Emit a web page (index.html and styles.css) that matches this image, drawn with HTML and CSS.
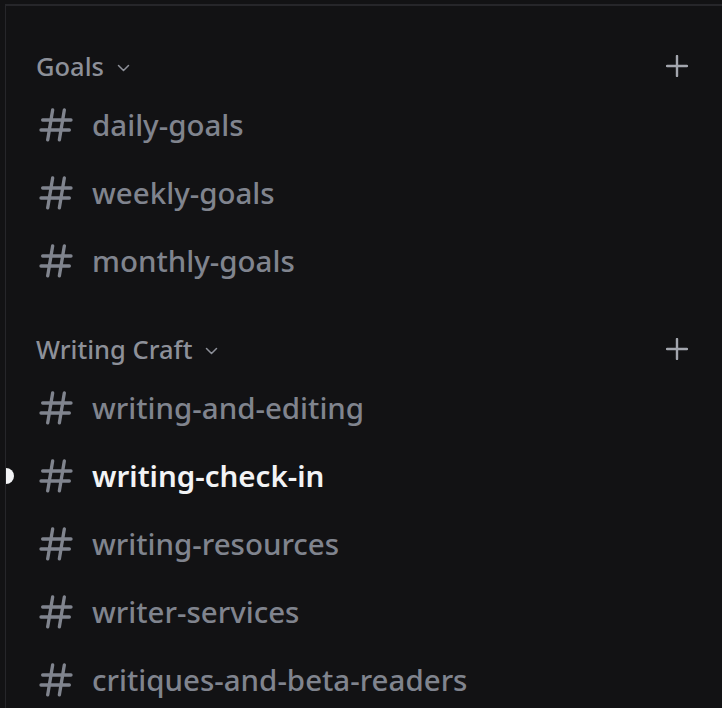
FILE: index.html
```html
<!DOCTYPE html>
<html>
<head>
<meta charset="utf-8">
<link rel="stylesheet" href="styles.css">
</head>
<body>
<div class="frame">
  <div class="panel">
    <section class="category">
      <div class="cat-head">
        <span class="cat-name">Goals</span>
        <svg class="chev" viewBox="0 0 12 8"><path d="M1 1.5l5 5 5-5" fill="none" stroke="currentColor" stroke-width="1.5" stroke-linecap="round" stroke-linejoin="round"/></svg>
        <svg class="plus" viewBox="0 0 22 22"><path d="M11 1v20M1 11h20" stroke="currentColor" stroke-width="2.4" stroke-linecap="round"/></svg>
      </div>
      <div class="channel"><svg class="hash" viewBox="0 0 24 24"><path fill="currentColor" fill-rule="evenodd" d="M10.99 3.16A1 1 0 1 0 9 2.84L8.15 8H4a1 1 0 0 0 0 2h3.82l-.67 4H3a1 1 0 1 0 0 2h3.82l-.8 4.84a1 1 0 0 0 1.97.32L8.85 16h4.97l-.8 4.84a1 1 0 0 0 1.97.32l.86-5.16H20a1 1 0 1 0 0-2h-3.82l.67-4H21a1 1 0 1 0 0-2h-3.82l.8-4.84a1 1 0 1 0-1.97-.32L15.15 8h-4.97l.8-4.84ZM14.15 14l.67-4H9.85l-.67 4h4.97Z"/></svg><span class="ch-name">daily-goals</span></div>
      <div class="channel"><svg class="hash" viewBox="0 0 24 24"><path fill="currentColor" fill-rule="evenodd" d="M10.99 3.16A1 1 0 1 0 9 2.84L8.15 8H4a1 1 0 0 0 0 2h3.82l-.67 4H3a1 1 0 1 0 0 2h3.82l-.8 4.84a1 1 0 0 0 1.97.32L8.85 16h4.97l-.8 4.84a1 1 0 0 0 1.97.32l.86-5.16H20a1 1 0 1 0 0-2h-3.82l.67-4H21a1 1 0 1 0 0-2h-3.82l.8-4.84a1 1 0 1 0-1.97-.32L15.15 8h-4.97l.8-4.84ZM14.15 14l.67-4H9.85l-.67 4h4.97Z"/></svg><span class="ch-name">weekly-goals</span></div>
      <div class="channel"><svg class="hash" viewBox="0 0 24 24"><path fill="currentColor" fill-rule="evenodd" d="M10.99 3.16A1 1 0 1 0 9 2.84L8.15 8H4a1 1 0 0 0 0 2h3.82l-.67 4H3a1 1 0 1 0 0 2h3.82l-.8 4.84a1 1 0 0 0 1.97.32L8.85 16h4.97l-.8 4.84a1 1 0 0 0 1.97.32l.86-5.16H20a1 1 0 1 0 0-2h-3.82l.67-4H21a1 1 0 1 0 0-2h-3.82l.8-4.84a1 1 0 1 0-1.97-.32L15.15 8h-4.97l.8-4.84ZM14.15 14l.67-4H9.85l-.67 4h4.97Z"/></svg><span class="ch-name">monthly-goals</span></div>
    </section>
    <section class="category">
      <div class="cat-head">
        <span class="cat-name">Writing Craft</span>
        <svg class="chev" viewBox="0 0 12 8"><path d="M1 1.5l5 5 5-5" fill="none" stroke="currentColor" stroke-width="1.5" stroke-linecap="round" stroke-linejoin="round"/></svg>
        <svg class="plus" viewBox="0 0 22 22"><path d="M11 1v20M1 11h20" stroke="currentColor" stroke-width="2.4" stroke-linecap="round"/></svg>
      </div>
      <div class="channel"><svg class="hash" viewBox="0 0 24 24"><path fill="currentColor" fill-rule="evenodd" d="M10.99 3.16A1 1 0 1 0 9 2.84L8.15 8H4a1 1 0 0 0 0 2h3.82l-.67 4H3a1 1 0 1 0 0 2h3.82l-.8 4.84a1 1 0 0 0 1.97.32L8.85 16h4.97l-.8 4.84a1 1 0 0 0 1.97.32l.86-5.16H20a1 1 0 1 0 0-2h-3.82l.67-4H21a1 1 0 1 0 0-2h-3.82l.8-4.84a1 1 0 1 0-1.97-.32L15.15 8h-4.97l.8-4.84ZM14.15 14l.67-4H9.85l-.67 4h4.97Z"/></svg><span class="ch-name">writing-and-editing</span></div>
      <div class="channel unread"><span class="pill"></span><svg class="hash" viewBox="0 0 24 24"><path fill="currentColor" fill-rule="evenodd" d="M10.99 3.16A1 1 0 1 0 9 2.84L8.15 8H4a1 1 0 0 0 0 2h3.82l-.67 4H3a1 1 0 1 0 0 2h3.82l-.8 4.84a1 1 0 0 0 1.97.32L8.85 16h4.97l-.8 4.84a1 1 0 0 0 1.97.32l.86-5.16H20a1 1 0 1 0 0-2h-3.82l.67-4H21a1 1 0 1 0 0-2h-3.82l.8-4.84a1 1 0 1 0-1.97-.32L15.15 8h-4.97l.8-4.84ZM14.15 14l.67-4H9.85l-.67 4h4.97Z"/></svg><span class="ch-name">writing-check-in</span></div>
      <div class="channel"><svg class="hash" viewBox="0 0 24 24"><path fill="currentColor" fill-rule="evenodd" d="M10.99 3.16A1 1 0 1 0 9 2.84L8.15 8H4a1 1 0 0 0 0 2h3.82l-.67 4H3a1 1 0 1 0 0 2h3.82l-.8 4.84a1 1 0 0 0 1.97.32L8.85 16h4.97l-.8 4.84a1 1 0 0 0 1.97.32l.86-5.16H20a1 1 0 1 0 0-2h-3.82l.67-4H21a1 1 0 1 0 0-2h-3.82l.8-4.84a1 1 0 1 0-1.97-.32L15.15 8h-4.97l.8-4.84ZM14.15 14l.67-4H9.85l-.67 4h4.97Z"/></svg><span class="ch-name">writing-resources</span></div>
      <div class="channel"><svg class="hash" viewBox="0 0 24 24"><path fill="currentColor" fill-rule="evenodd" d="M10.99 3.16A1 1 0 1 0 9 2.84L8.15 8H4a1 1 0 0 0 0 2h3.82l-.67 4H3a1 1 0 1 0 0 2h3.82l-.8 4.84a1 1 0 0 0 1.97.32L8.85 16h4.97l-.8 4.84a1 1 0 0 0 1.97.32l.86-5.16H20a1 1 0 1 0 0-2h-3.82l.67-4H21a1 1 0 1 0 0-2h-3.82l.8-4.84a1 1 0 1 0-1.97-.32L15.15 8h-4.97l.8-4.84ZM14.15 14l.67-4H9.85l-.67 4h4.97Z"/></svg><span class="ch-name">writer-services</span></div>
      <div class="channel"><svg class="hash" viewBox="0 0 24 24"><path fill="currentColor" fill-rule="evenodd" d="M10.99 3.16A1 1 0 1 0 9 2.84L8.15 8H4a1 1 0 0 0 0 2h3.82l-.67 4H3a1 1 0 1 0 0 2h3.82l-.8 4.84a1 1 0 0 0 1.97.32L8.85 16h4.97l-.8 4.84a1 1 0 0 0 1.97.32l.86-5.16H20a1 1 0 1 0 0-2h-3.82l.67-4H21a1 1 0 1 0 0-2h-3.82l.8-4.84a1 1 0 1 0-1.97-.32L15.15 8h-4.97l.8-4.84ZM14.15 14l.67-4H9.85l-.67 4h4.97Z"/></svg><span class="ch-name">critiques-and-beta-readers</span></div>
    </section>
  </div>
</div>
</body>
</html>
```

FILE: styles.css
```css
html, body {
  margin: 0;
  padding: 0;
  background: #121214;
  height: 100%;
  overflow: hidden;
}
.frame {
  padding: 4px 0 0 5px;
  height: 100%;
  box-sizing: border-box;
}
.panel {
  border-top: 2px solid #26262a;
  border-left: 1px solid #26262a;
  height: 100%;
  padding: 37px 0 0 0;
  box-sizing: border-box;
  font-family: "Noto Sans", "Open Sans", sans-serif;
}
.category + .category {
  margin-top: 31px;
}
.cat-head {
  height: 48px;
  display: flex;
  align-items: center;
  padding-left: 30px;
  padding-right: 34px;
  box-sizing: border-box;
  padding-bottom: 2px;
}
.cat-name {
  font-size: 25.5px;
  font-weight: 500;
  color: #8d9099;
}
.chev {
  width: 13px;
  height: 8px;
  margin-left: 13px;
  margin-top: 4px;
  color: #8d9099;
}
.plus {
  width: 22px;
  height: 22px;
  margin-left: auto;
  color: #a3a6ae;
}
.channel {
  position: relative;
  height: 68px;
  display: flex;
  align-items: center;
  padding-left: 30px;
  box-sizing: border-box;
  padding-bottom: 2px;
}
.hash {
  width: 40px;
  height: 40px;
  flex: none;
  color: #80848e;
  margin-top: 2px;
}
.ch-name {
  margin-left: 16px;
  font-size: 29.5px;
  font-weight: 500;
  color: #80848e;
}
.unread .ch-name {
  color: #f2f3f5;
  font-weight: 600;
}
.pill {
  position: absolute;
  left: 0;
  top: 50%;
  width: 8px;
  height: 16px;
  margin-top: -8px;
  background: #f2f3f5;
  border-radius: 0 8px 8px 0;
}
```
